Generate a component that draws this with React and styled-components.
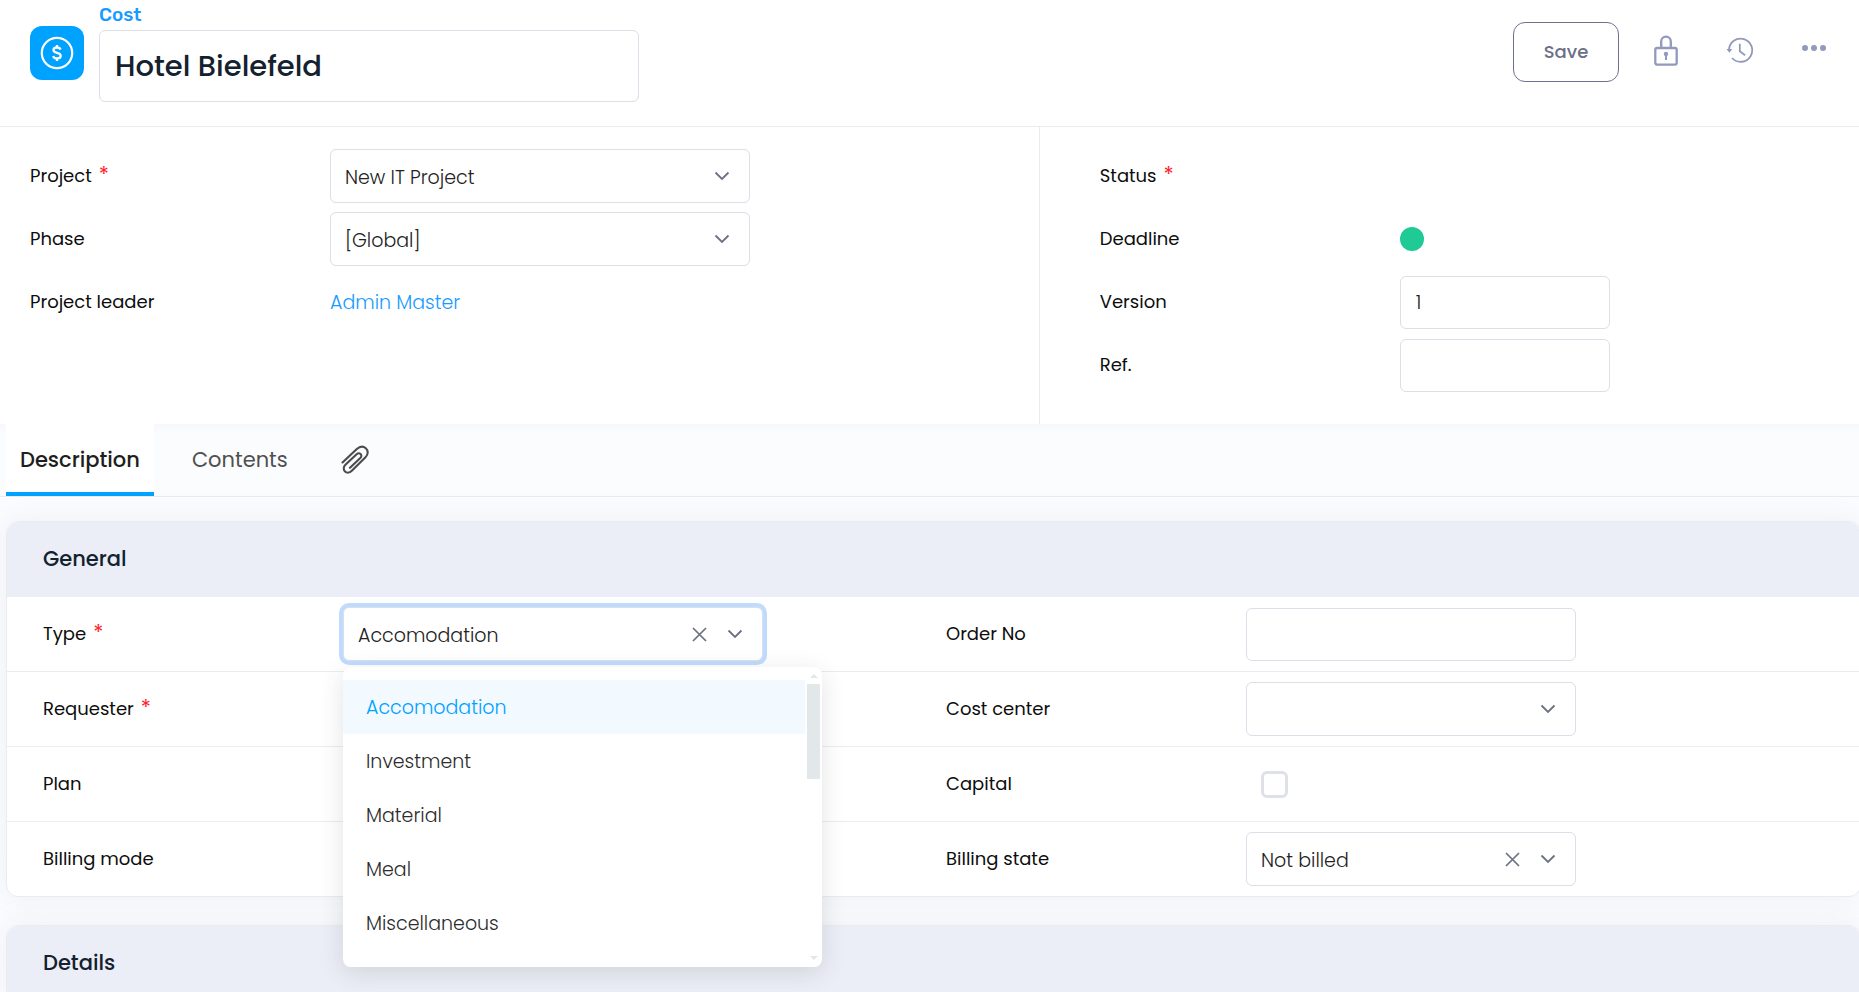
import styled, { createGlobalStyle, css } from "styled-components";

import { useState } from "react";

const GlobalStyle = createGlobalStyle`
  *,
  *:before,
  *:after {
    box-sizing: border-box;
  }
  body {
    margin: 0;
    background: #fbfcfe;
    color: #0d0d0d;
    font-family: Poppins, Inter, "Open Sans", sans-serif;
    font-size: 18px;
    line-height: 24px;
    overflow-x: hidden;
  }
  button,
  input,
  select {
    font-family: inherit;
  }
`;

const Page = styled.div`
  min-height: 100vh;
  overflow: hidden;
`;

const Header = styled.header`
  display: flex;
  justify-content: space-between;
  align-items: flex-start;
  padding: 0 28px 24px 30px;
  background: #ffffff;
  border-bottom: 1px solid #ebebed;
`;

const HeaderTitle = styled.div`
  display: flex;
  align-items: flex-start;
  gap: 15px;
`;

const CostBadge = styled.div`
  display: flex;
  align-items: center;
  justify-content: center;
  width: 54px;
  height: 54px;
  margin-top: 26px;
  border-radius: 12px;
  background: #00a2ff;
`;

const TitleField = styled.div`
  display: flex;
  flex-direction: column;
  width: 540px;
  & label {
    height: 30px;
    padding-top: 3px;
    color: #179bff;
    font-family: Rubik, Roboto, sans-serif;
    font-size: 19px;
    font-weight: 500;
  }
`;

const field = css`
  border: 1px solid #dcdee8;
  border-radius: 6px;
  background: #ffffff;
  outline: none;
`;

const TitleInput = styled.input`
  ${field}
  width: 100%;
  height: 72px;
  padding: 0 15px;
  color: #14212e;
  font-size: 29px;
  font-weight: 500;
`;

const HeaderActions = styled.div`
  display: flex;
  align-items: flex-start;
  padding-top: 22px;
  gap: 30px;
`;

const IconGroup = styled.div`
  display: flex;
  gap: 40px;
`;

const SaveButton = styled.button`
  width: 106px;
  height: 60px;
  padding-bottom: 3px;
  border: 1px solid #6d7191;
  border-radius: 12px;
  background: #ffffff;
  color: #6b7086;
  font-size: 18px;
  font-weight: 500;
`;

const IconButton = styled.button`
  display: flex;
  align-items: center;
  justify-content: center;
  width: 34px;
  height: 57px;
  padding: 0;
  border: 0;
  background: none;
  color: #9299bb;
`;

const Summary = styled.section`
  display: grid;
  grid-template-columns: 33fr 26fr;
  background: #ffffff;
`;

const SummaryColumn = styled.div`
  display: flex;
  flex-direction: column;
  gap: 9px;
  padding: ${(props) => (props.$side ? "22px 30px 32px 60px" : "22px 30px 32px 30px")};
  border-right: ${(props) => (props.$side ? "0" : "1px solid #ebebed")};
`;

const FieldRow = styled.div`
  display: grid;
  grid-template-columns: 300px 1fr;
  align-items: center;
  min-height: ${(props) => (props.$tall ? "74px" : "54px")};
`;

const Label = styled.label`
  color: #0d0d0d;
  font-size: 18px;
`;

const Required = styled.span`
  margin-left: 7px;
  color: #ff1f2d;
  font-size: 21px;
  line-height: 18px;
`;

const TextInput = styled.input`
  ${field}
  width: ${(props) => props.$width};
  height: 53px;
  padding: 0 15px;
  color: #222222;
  font-size: 19px;
  font-weight: 300;
`;

const SelectBox = styled.div`
  position: relative;
  width: ${(props) => props.$width};
`;

const Select = styled.select`
  ${field}
  display: block;
  width: 100%;
  height: 54px;
  padding: 2px 80px 0 14px;
  appearance: none;
  color: #222222;
  font-size: 19px;
  font-weight: 300;
  box-shadow: ${(props) => (props.$open ? "0 0 0 4px #bfdcff" : "none")};
`;

const SelectIcons = styled.div`
  position: absolute;
  top: 0;
  right: 20px;
  display: flex;
  align-items: center;
  gap: 20px;
  height: 54px;
  color: #6b7183;
  pointer-events: none;
`;

const ClearButton = styled.button`
  display: flex;
  padding: 0;
  border: 0;
  background: none;
  color: inherit;
  pointer-events: auto;
`;

const LeaderLink = styled.a`
  padding-top: 2px;
  color: #179bff;
  font-size: 19px;
  font-weight: 300;
  text-decoration: none;
`;

const StatusDot = styled.span`
  width: 24px;
  height: 24px;
  border-radius: 50%;
  background: #1fca94;
`;

const Checkbox = styled.input`
  width: 27px;
  height: 27px;
  margin: 0 0 0 15px;
  appearance: none;
  border: 3px solid #dfe1e9;
  border-radius: 6px;
  background: #ffffff;
`;

const Tabs = styled.nav`
  display: flex;
  height: 73px;
  padding-left: 6px;
  border-bottom: 1px solid #e9ebee;
  background: linear-gradient(#f7f8fc, #fbfcfe 10px);
`;

const Tab = styled.button`
  display: flex;
  align-items: center;
  padding: ${(props) => (props.$active ? "3px 14px 0" : "3px 0 0")};
  margin-right: ${(props) => (props.$active ? "38px" : "53px")};
  border: 0;
  border-bottom: 4px solid ${(props) => (props.$active ? "#00a2ff" : "transparent")};
  background: ${(props) => (props.$active ? "#ffffff" : "none")};
  color: ${(props) => (props.$active ? "#1e1e1e" : "#505050")};
  font-size: 21px;
  font-weight: ${(props) => (props.$active ? 500 : 400)};
`;

const Card = styled.section`
  margin: ${(props) => (props.$first ? "24px" : "28px")} -2px 0 6px;
  border: 1px solid #e9ebf0;
  border-radius: 12px;
  background: #ffffff;
  box-shadow: 0 0 30px rgba(150, 160, 200, 0.14);
`;

const CardTitle = styled.h2`
  display: flex;
  align-items: center;
  height: 75px;
  margin: 0;
  padding: 0 36px 2px;
  border-radius: 12px 12px 0 0;
  background: #ebeef6;
  color: #14212e;
  font-size: 21px;
  font-weight: 500;
`;

const CardRow = styled.div`
  display: grid;
  grid-template-columns: 1fr 1fr;
  padding: 0 11px 0 36px;
  border-bottom: 1px solid #ebecef;
  &:last-child {
    border-bottom: 0;
  }
`;

const Menu = styled.ul`
  position: absolute;
  z-index: 2;
  top: 60px;
  left: 0;
  width: 479px;
  height: 300px;
  margin: 0;
  padding: 13px 0 0;
  border-radius: 8px;
  background: #ffffff;
  box-shadow: 0 6px 24px rgba(60, 60, 60, 0.14);
  list-style: none;
`;

const MenuItem = styled.li`
  display: flex;
  align-items: center;
  height: 54px;
  margin-right: 17px;
  padding: 2px 0 0 23px;
  background: ${(props) => (props.$selected ? "#f2f9ff" : "none")};
  color: ${(props) => (props.$selected ? "#00a2ff" : "#2c2c2c")};
  font-size: 19px;
  font-weight: 300;
`;

const MenuScroll = styled.div`
  position: absolute;
  z-index: 3;
  top: 60px;
  left: 464px;
  display: flex;
  flex-direction: column;
  align-items: center;
  width: 13px;
  height: 300px;
  padding: 7px 0;
  & span {
    width: 13px;
    height: 95px;
    margin: 6px 0 auto;
    background: #e2e8ea;
  }
`;

const costTypes = ["Accomodation", "Investment", "Material", "Meal", "Miscellaneous"];

const Chevron = () => (
  <svg width="16" height="10" viewBox="0 0 16 10" fill="none" stroke="currentColor" strokeWidth="1.8" aria-hidden="true">
    <path d="M1.5 1.5 8 8l6.5-6.5" />
  </svg>
);

const Cross = () => (
  <svg width="15" height="15" viewBox="0 0 15 15" fill="none" stroke="currentColor" strokeWidth="1.7" aria-hidden="true">
    <path d="M1 1l13 13M14 1L1 14" />
  </svg>
);

const CoinIcon = () => (
  <svg width="34" height="34" viewBox="0 0 34 34" fill="none" stroke="#ffffff" strokeWidth="2.2" aria-hidden="true">
    <circle cx="17" cy="17" r="15.2" />
    <path
      d="M20.5 13.6c-.5-1.5-1.9-2.1-3.5-2.1-2 0-3.5.9-3.5 2.6 0 3.9 7.2 1.7 7.2 5.7 0 1.8-1.6 2.7-3.7 2.7-1.9 0-3.4-.8-3.8-2.5M17 9v2.5M17 22.5V25"
      strokeWidth="2.3"
    />
  </svg>
);

const LockIcon = () => (
  <svg width="24" height="31" viewBox="0 0 24 31" fill="none" stroke="currentColor" strokeWidth="2.3" aria-hidden="true">
    <rect x="1.3" y="13" width="21.4" height="16.6" rx="1.8" />
    <path d="M7.2 13V6.4a4.8 4.8 0 0 1 9.6 0V13" />
    <circle cx="12" cy="19" r="2.2" fill="currentColor" stroke="none" />
    <path d="M12 19v6" strokeWidth="2" />
  </svg>
);

const HistoryIcon = () => (
  <svg width="28" height="28" viewBox="0 0 28 28" fill="none" stroke="currentColor" strokeWidth="1.8" aria-hidden="true">
    <path d="M3 13A11.6 11.6 0 1 1 6 21" />
    <path d="M13.8 6.8v7.5l5.3 4" />
    <path d="M.5 12h5.800L3.4 15.8z" fill="currentColor" stroke="none" />
  </svg>
);

const DotsIcon = () => (
  <svg width="26" height="14" viewBox="0 0 26 14" fill="currentColor" aria-hidden="true">
    <circle cx="4" cy="4" r="3" />
    <circle cx="13" cy="4" r="3" />
    <circle cx="22" cy="4" r="3" />
  </svg>
);

const ClipIcon = () => (
  <svg width="30" height="30" viewBox="0 0 30 30" fill="none" stroke="#4b4b4b" strokeWidth="2.1" strokeLinecap="round" aria-hidden="true">
    <path d="M1.5 17.5 15.8 4c3-2.7 6.5-3 9-.8 2.6 2.4 2.6 6.2-.3 9L10.8 25.8c-2.2 2.2-5 2.3-6.8.6-1.8-1.7-1.7-4.5.4-6.6L15.6 9.3c1.3-1.2 2.9-1.3 4-.3 1.1 1.1 1 2.8-.3 4L9 22.8" />
  </svg>
);

const SelectField = ({ id, width, options, clearable, open, children }) => {
  const [value, setValue] = useState(options[0]);

  return (
    <SelectBox $width={width}>
      <Select id={id} value={value} $open={open} onChange={(e) => setValue(e.target.value)}>
        {options.map((option) => (
          <option key={option}>{option}</option>
        ))}
      </Select>
      <SelectIcons>
        {clearable && (
          <ClearButton type="button" aria-label="Clear">
            <Cross />
          </ClearButton>
        )}
        <Chevron />
      </SelectIcons>
      {children}
    </SelectBox>
  );
};

const Row = ({ label, id, required, tall, children }) => (
  <FieldRow $tall={tall}>
    <Label htmlFor={id}>
      {label}
      {required && <Required>*</Required>}
    </Label>
    {children}
  </FieldRow>
);

const App = () => {
  return (
    <Page>
      <GlobalStyle />
      <Header>
        <HeaderTitle>
          <CostBadge>
            <CoinIcon />
          </CostBadge>
          <TitleField>
            <label htmlFor="title">Cost</label>
            <TitleInput id="title" defaultValue="Hotel Bielefeld" />
          </TitleField>
        </HeaderTitle>
        <HeaderActions>
          <SaveButton type="button">Save</SaveButton>
          <IconGroup>
            <IconButton type="button" aria-label="Lock">
              <LockIcon />
            </IconButton>
            <IconButton type="button" aria-label="History">
              <HistoryIcon />
            </IconButton>
            <IconButton type="button" aria-label="More">
              <DotsIcon />
            </IconButton>
          </IconGroup>
        </HeaderActions>
      </Header>

      <Summary>
        <SummaryColumn>
          <Row label="Project" id="project" required>
            <SelectField id="project" width="420px" options={["New IT Project"]} />
          </Row>
          <Row label="Phase" id="phase">
            <SelectField id="phase" width="420px" options={["[Global]"]} />
          </Row>
          <Row label="Project leader" id="leader">
            <LeaderLink id="leader" href="#">
              Admin Master
            </LeaderLink>
          </Row>
        </SummaryColumn>
        <SummaryColumn $side>
          <Row label="Status" required />
          <Row label="Deadline">
            <StatusDot />
          </Row>
          <Row label="Version" id="version">
            <TextInput id="version" $width="210px" defaultValue="1" />
          </Row>
          <Row label="Ref." id="ref">
            <TextInput id="ref" $width="210px" />
          </Row>
        </SummaryColumn>
      </Summary>

      <Tabs>
        <Tab type="button" $active>
          Description
        </Tab>
        <Tab type="button">Contents</Tab>
        <Tab type="button" aria-label="Attachments">
          <ClipIcon />
        </Tab>
      </Tabs>

      <Card $first>
        <CardTitle>General</CardTitle>
        <CardRow>
          <Row label="Type" id="type" required tall>
            <SelectField id="type" width="420px" options={costTypes} clearable open>
              <Menu role="listbox" aria-label="Type">
                {costTypes.map((type, i) => (
                  <MenuItem key={type} role="option" aria-selected={i === 0} $selected={i === 0}>
                    {type}
                  </MenuItem>
                ))}
              </Menu>
              <MenuScroll>
                <svg width="8" height="4" viewBox="0 0 8 4" fill="#e2e8ea" aria-hidden="true">
                  <path d="M0 4l4-4 4 4z" />
                </svg>
                <span />
                <svg width="8" height="4" viewBox="0 0 8 4" fill="#e2e8ea" aria-hidden="true">
                  <path d="M0 0l4 4 4-4z" />
                </svg>
              </MenuScroll>
            </SelectField>
          </Row>
          <Row label="Order No" id="order" tall>
            <TextInput id="order" $width="330px" />
          </Row>
        </CardRow>
        <CardRow>
          <Row label="Requester" required tall />
          <Row label="Cost center" id="center" tall>
            <SelectField id="center" width="330px" options={[""]} />
          </Row>
        </CardRow>
        <CardRow>
          <Row label="Plan" tall />
          <Row label="Capital" id="capital" tall>
            <Checkbox id="capital" type="checkbox" />
          </Row>
        </CardRow>
        <CardRow>
          <Row label="Billing mode" tall />
          <Row label="Billing state" id="state" tall>
            <SelectField id="state" width="330px" options={["Not billed"]} clearable />
          </Row>
        </CardRow>
      </Card>

      <Card>
        <CardTitle>Details</CardTitle>
      </Card>
    </Page>
  );
};

export default App;
